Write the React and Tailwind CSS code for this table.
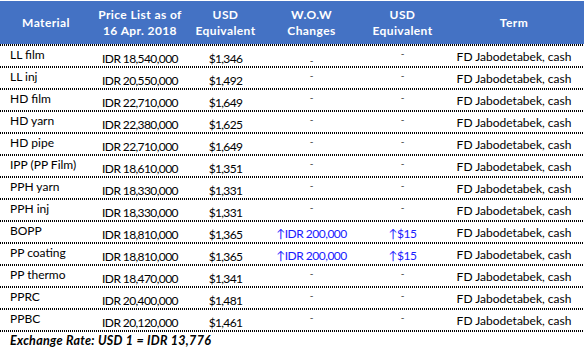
const rows = [
  { name: 'LL film', price: 'IDR 18,540,000', usd: '$1,346', wow: null, usd2: null, low: true },
  { name: 'LL inj', price: 'IDR 20,550,000', usd: '$1,492' },
  { name: 'HD film', price: 'IDR 22,710,000', usd: '$1,649' },
  { name: 'HD yarn', price: 'IDR 22,380,000', usd: '$1,625' },
  { name: 'HD pipe', price: 'IDR 22,710,000', usd: '$1,649' },
  { name: 'IPP (PP Film)', price: 'IDR 18,610,000', usd: '$1,351' },
  { name: 'PPH yarn', price: 'IDR 18,330,000', usd: '$1,331' },
  { name: 'PPH inj', price: 'IDR 18,330,000', usd: '$1,331' },
  { name: 'BOPP', price: 'IDR 18,810,000', usd: '$1,365', wow: '↑IDR 200,000', usd2: '↑$15' },
  { name: 'PP coating', price: 'IDR 18,810,000', usd: '$1,365', wow: '↑IDR 200,000', usd2: '↑$15' },
  { name: 'PP thermo', price: 'IDR 18,470,000', usd: '$1,341' },
  { name: 'PPRC', price: 'IDR 20,400,000', usd: '$1,481' },
  { name: 'PPBC', price: 'IDR 20,120,000', usd: '$1,461' },
];

const cols = 'grid grid-cols-[92px_96px_75px_97px_85px_138px]';

const Divider = () => (
  <div className="h-[2px] w-full bg-[repeating-linear-gradient(90deg,#000_0_1px,transparent_1px_2px)]" />
);

const Dash = ({ low }) => (
  <div className={`flex justify-center text-[10px] leading-none text-[#333] ${low ? 'pt-[9px]' : 'pt-[2px]'}`}>-</div>
);

export default function App() {
  return (
    <div className="w-[584px] h-[352px] bg-white text-black font-['Lato',sans-serif] text-[12px]">
      <div className="pt-[1px]">
        <div className={`${cols} h-[43px] bg-[#4472c4] text-white font-bold text-[12px] leading-[16px] tracking-[0.4px] items-center text-center`}>
          <div>Material</div>
          <div>Price List as of<br />16 Apr. 2018</div>
          <div>USD<br />Equivalent</div>
          <div>W.O.W<br />Changes</div>
          <div>USD<br />Equivalent</div>
          <div>Term</div>
        </div>
        <Divider />
        {rows.map(r => (
          <div key={r.name}>
            <div className={`${cols} h-[20px] leading-[16px]`}>
              <div className="pl-[10px] pt-[1px]">{r.name}</div>
              <div className="text-center pt-[5px] tracking-[-0.6px]">{r.price}</div>
              <div className="text-center pt-[5px] tracking-[-0.7px]">{r.usd}</div>
              {r.wow ? (
                <div className="text-center pt-[4px] text-[#1a1aff] tracking-[-0.5px]">{r.wow}</div>
              ) : (
                <Dash low={r.low} />
              )}
              {r.usd2 ? (
                <div className="text-center pt-[4px] text-[#1a1aff] tracking-[-0.5px]">{r.usd2}</div>
              ) : (
                <Dash />
              )}
              <div className="text-center pt-[3px]">FD Jabodetabek, cash</div>
            </div>
            <Divider />
          </div>
        ))}
        <div className="pl-[10px] font-bold italic text-[12.5px] tracking-[0.3px] leading-[16px] pt-[1px]">
          Exchange Rate: USD 1 = IDR 13,776
        </div>
      </div>
    </div>
  );
}
